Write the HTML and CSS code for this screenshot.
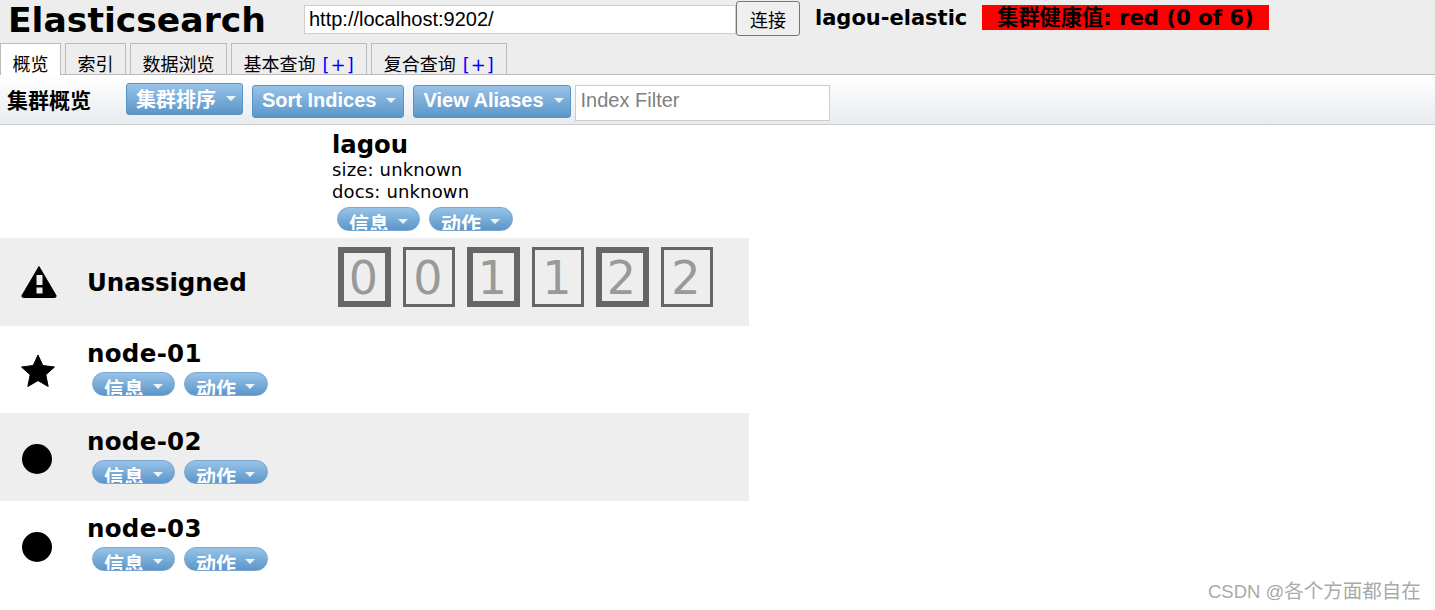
FILE: index.html
```html
<!DOCTYPE html>
<html lang="en">
<head>
    <meta charset="UTF-8">
    <title>Elasticsearch</title>
    <link rel="stylesheet" href="styles.css">
</head>
<body>

<div class="header">
    <div class="header-top">
        <h1 class="logo">Elasticsearch</h1>
        <input class="uri" type="text" value="http://localhost:9202/">
        <button class="connect">连接</button>
        <span class="cluster-name">lagou-elastic</span>
        <span class="health">集群健康值: red (0 of 6)</span>
    </div>
    <div class="tabs">
        <div class="tab active">概览</div>
        <div class="tab">索引</div>
        <div class="tab">数据浏览</div>
        <div class="tab">基本查询 <span class="plus">[+]</span></div>
        <div class="tab">复合查询 <span class="plus">[+]</span></div>
    </div>
</div>

<div class="toolbar">
    <h2 class="toolbar-title">集群概览</h2>
    <div class="btn first">集群排序<i class="caret"></i></div>
    <div class="btn sort">Sort Indices<i class="caret"></i></div>
    <div class="btn">View Aliases<i class="caret"></i></div>
    <input class="filter" type="text" placeholder="Index Filter">
</div>

<div class="overview">
    <div class="row index-row">
        <div class="icon-cell"></div>
        <div class="name-cell"></div>
        <div class="index-cell">
            <div class="index-name">lagou</div>
            <div class="index-info">size: unknown</div>
            <div class="index-info">docs: unknown</div>
            <div class="pills index-pills">
                <div class="pill">信息<i class="caret"></i></div>
                <div class="pill">动作<i class="caret"></i></div>
            </div>
        </div>
    </div>

    <div class="row grey unassigned">
        <div class="icon-cell">
            <svg width="36" height="34" viewBox="0 0 36 34">
                <path d="M18 1.5 L35 30.5 Q35.5 32.500 33.500 32.500 L2.500 32.500 Q.5 32.500 1 30.500 Z" fill="#000" stroke="#000" stroke-linejoin="round"/>
                <rect x="15.500" y="10" width="6" height="10" fill="#eee"/>
                <rect x="15.500" y="22.500" width="6" height="6" fill="#eee"/>
            </svg>
        </div>
        <div class="name-cell"><div class="node-name">Unassigned</div></div>
        <div class="shards">
            <div class="shard primary">0</div>
            <div class="shard">0</div>
            <div class="shard primary">1</div>
            <div class="shard">1</div>
            <div class="shard primary">2</div>
            <div class="shard">2</div>
        </div>
    </div>

    <div class="row node master">
        <div class="icon-cell">
            <svg width="34" height="32" viewBox="0 0 34 32">
                <path d="M17 0 L21.800 10.500 L33.500 12 L24.800 19.800 L27.200 31.500 L17 25.600 L6.800 31.500 L9.200 19.800 L.5 12 L12.200 10.500 Z" fill="#000" stroke="#000" stroke-linejoin="round"/>
            </svg>
        </div>
        <div class="name-cell">
            <div class="node-name">node-01</div>
            <div class="pills">
                <div class="pill">信息<i class="caret"></i></div>
                <div class="pill">动作<i class="caret"></i></div>
            </div>
        </div>
    </div>

    <div class="row node grey">
        <div class="icon-cell"><div class="dot"></div></div>
        <div class="name-cell">
            <div class="node-name">node-02</div>
            <div class="pills">
                <div class="pill">信息<i class="caret"></i></div>
                <div class="pill">动作<i class="caret"></i></div>
            </div>
        </div>
    </div>

    <div class="row node">
        <div class="icon-cell"><div class="dot"></div></div>
        <div class="name-cell">
            <div class="node-name">node-03</div>
            <div class="pills">
                <div class="pill">信息<i class="caret"></i></div>
                <div class="pill">动作<i class="caret"></i></div>
            </div>
        </div>
    </div>
</div>

<div class="watermark">CSDN @<span class="watermark-name">各个方面都自在</span></div>

</body>
</html>
```

FILE: styles.css
```css
body {
    margin: 0;
    height: 610px;
    overflow: hidden;
    background-color: white;
    font-family: "DejaVu Sans", "Noto Sans CJK SC", sans-serif;
    color: black;
}
.header {
    height: 74px;
    background-color: #ededed;
    border-bottom: 1px solid #bbb;
    display: flex;
    flex-direction: column;
    justify-content: space-between;
}
.header-top {
    display: flex;
    align-items: flex-start;
    height: 43px;
}
.logo {
    margin: 0 0 0 8px;
    width: 296px;
    font-size: 34.600px;
    line-height: 41px;
    font-weight: bold;
}
.uri {
    box-sizing: border-box;
    width: 432px;
    height: 29px;
    margin-top: 5px;
    padding: 0 4px;
    border: 1px solid #ccc;
    background-color: white;
    font-family: "Liberation Sans", sans-serif;
    font-size: 20px;
}
.connect {
    box-sizing: border-box;
    width: 64px;
    height: 35px;
    margin-top: 1px;
    padding: 0;
    border: 1px solid #767676;
    border-radius: 3px;
    background-color: #efefef;
    font-family: "Noto Sans CJK SC", sans-serif;
    font-size: 18px;
}
.cluster-name {
    margin: 5px 0 0 15px;
    width: 167px;
    font-size: 21px;
    line-height: 27px;
    font-weight: bold;
    white-space: nowrap;
}
.health {
    box-sizing: border-box;
    width: 287px;
    height: 25px;
    margin-top: 5px;
    background-color: red;
    font-size: 21.200px;
    line-height: 26px;
    font-weight: bold;
    text-align: center;
    white-space: nowrap;
}
.tabs {
    display: flex;
    gap: 4px;
    height: 31px;
}
.tab {
    box-sizing: border-box;
    height: 32px;
    padding: 0 11.500px;
    border: 1px solid #bbb;
    border-bottom: none;
    font-family: "Noto Sans CJK SC", sans-serif;
    font-size: 18px;
    line-height: 39px;
    white-space: nowrap;
    overflow: hidden;
}
.tab.active {
    background-color: white;
    position: relative;
    z-index: 1;
}
.plus {
    margin-left: 3px;
    color: #00f;
    font-family: "DejaVu Sans", sans-serif;
    letter-spacing: 1px;
}
.toolbar {
    box-sizing: border-box;
    height: 50px;
    display: flex;
    align-items: flex-start;
    padding-top: 10px;
    background: linear-gradient(to bottom, #fff, #e8ebef);
    border-bottom: 1px solid #ccc;
}
.toolbar-title {
    margin: 0 0 0 7px;
    width: 119px;
    font-family: "Noto Sans CJK SC", sans-serif;
    font-size: 21px;
    line-height: 29px;
    font-weight: bold;
}
.btn {
    box-sizing: border-box;
    height: 33px;
    padding: 0 6px 2px 9px;
    margin-right: 9px;
    display: flex;
    align-items: center;
    border: 1px solid #5b92c4;
    border-radius: 3px;
    background: linear-gradient(to bottom, #98c3e8, #5b96c9);
    color: white;
    font-family: "Liberation Sans", "Noto Sans CJK SC", sans-serif;
    font-size: 20px;
    font-weight: bold;
    white-space: nowrap;
}
.btn.first {
    height: 32px;
    margin-top: -2px;
    font-family: "Noto Sans CJK SC", sans-serif;
}
.btn.sort {
    padding-right: 7px;
}
.caret {
    display: inline-block;
    width: 0;
    height: 0;
    margin-left: 10px;
    border-left: 5px solid transparent;
    border-right: 5px solid transparent;
    border-top: 5px solid rgba(255, 255, 255, 0.85);
}
.filter {
    box-sizing: border-box;
    width: 255px;
    height: 36px;
    margin-left: -5px;
    padding: 0 5px 5px;
    border: 1px solid #ccc;
    background-color: white;
    font-family: "Liberation Sans", sans-serif;
    font-size: 20px;
}
.filter::placeholder {
    color: #808080;
}
.overview {
    width: 749px;
}
.row {
    display: flex;
    height: 88px;
}
.row.grey {
    background-color: #eee;
}
.index-row {
    height: 113px;
}
.node.master {
    height: 87px;
}
.icon-cell {
    width: 88px;
    padding-left: 21px;
    box-sizing: border-box;
    display: flex;
    align-items: center;
}
.node .icon-cell {
    padding-top: 4px;
}
.master .icon-cell {
    padding-top: 3px;
}
.name-cell {
    width: 244px;
}
.node-name {
    margin-left: -1px;
    font-size: 24.500px;
    line-height: 30px;
    font-weight: bold;
    padding-top: 13px;
    white-space: nowrap;
    letter-spacing: 0.3px;
}
.unassigned .node-name {
    padding-top: 30px;
    letter-spacing: -0.1px;
}
.node.grey .node-name {
    padding-top: 14px;
}
.dot {
    width: 30px;
    height: 30px;
    margin-left: 1px;
    border-radius: 50%;
    background-color: black;
}
.index-cell {
    width: 400px;
}
.index-name {
    font-size: 24.300px;
    line-height: 28px;
    padding-top: 6px;
    font-weight: bold;
}
.index-info {
    font-size: 18px;
    line-height: 22px;
    letter-spacing: 0.15px;
}
.pills {
    display: flex;
    gap: 9px;
    padding-left: 4px;
    margin-top: 3px;
}
.index-pills {
    padding-left: 5px;
    margin-top: 4px;
}
.pill {
    box-sizing: border-box;
    width: 83px;
    height: 24px;
    padding-left: 11px;
    display: flex;
    align-items: flex-start;
    border: 1px solid #7ba6d0;
    border-radius: 12px;
    overflow: hidden;
    background: linear-gradient(to bottom, #98c3e8, #5b96c9);
    color: white;
    font-family: "Noto Sans CJK SC", sans-serif;
    font-size: 20px;
    line-height: 32px;
    font-weight: bold;
    white-space: nowrap;
}
.pill:nth-child(2) {
    width: 84px;
}
.pill .caret {
    margin-top: 11px;
    margin-left: 9px;
}
.shards {
    display: flex;
    gap: 12px;
    padding: 9px 0 0 6px;
}
.shard {
    box-sizing: border-box;
    width: 52px;
    height: 60px;
    border: 3px solid #666;
    color: #999;
    font-size: 46px;
    line-height: 56px;
    text-align: center;
    text-indent: -2px;
}
.shard.primary {
    width: 53px;
    border-width: 6px;
    line-height: 50px;
}
.watermark {
    position: absolute;
    left: 1208px;
    top: 578px;
    color: #aaa;
    font-family: "Liberation Sans", "Noto Sans CJK SC", sans-serif;
    font-size: 18.500px;
    line-height: 26px;
    white-space: nowrap;
}
.watermark-name {
    font-size: 19.500px;
}
```
